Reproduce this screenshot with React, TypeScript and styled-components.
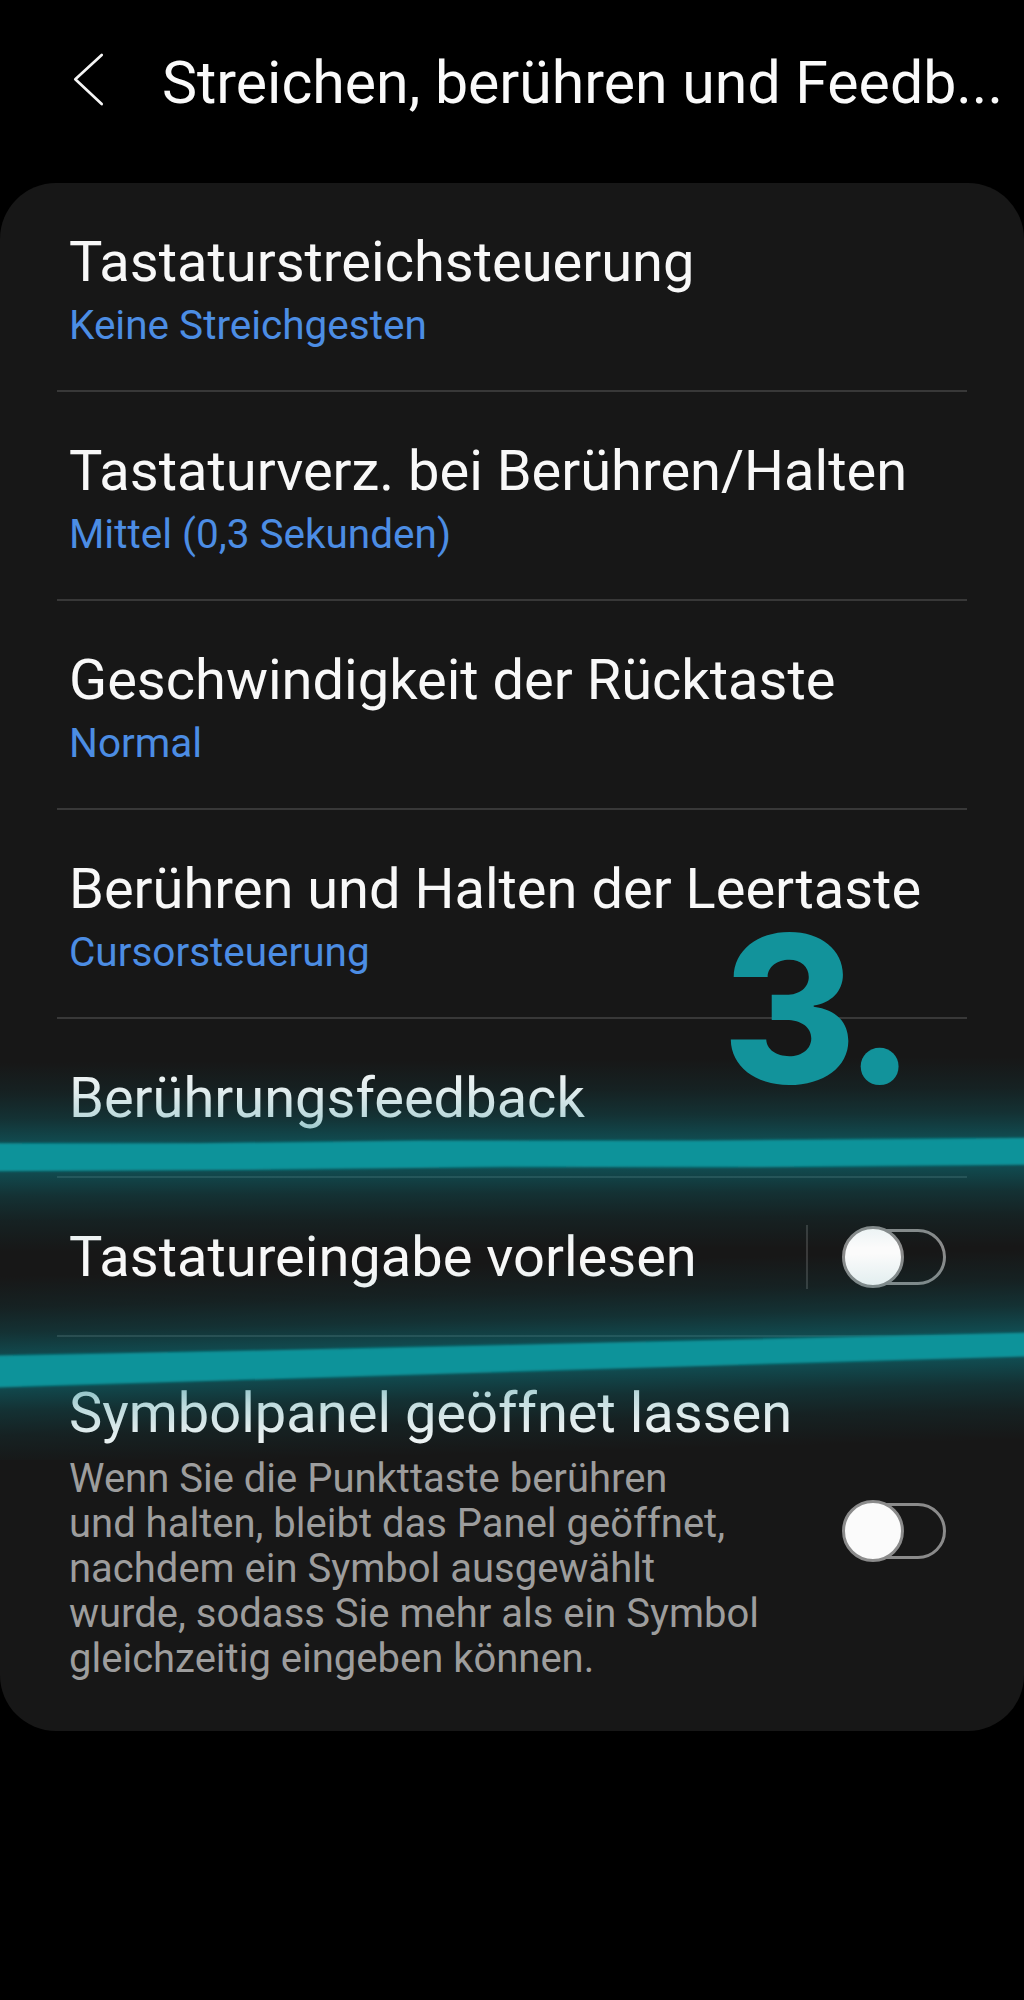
import React from "react";
import styled, { createGlobalStyle } from "styled-components";

const GlobalStyle = createGlobalStyle`
  html, body {
    margin: 0;
    padding: 0;
    background: #000;
  }
  body {
    font-family: Roboto, "Noto Sans", "Liberation Sans", sans-serif;
    -webkit-font-smoothing: antialiased;
  }
  * {
    box-sizing: border-box;
  }
`;

const Page = styled.div`
  position: relative;
  width: 1024px;
  min-height: 2000px;
  background: #000;
  overflow: hidden;
`;

const Header = styled.header`
  display: flex;
  align-items: flex-start;
  gap: 57px;
  height: 116px;
  padding: 50px 10px 0 73px;
`;

const BackIcon = styled.svg`
  flex: none;
  margin-top: 2px;
`;

const Title = styled.h1`
  margin: 0;
  font-size: 59px;
  line-height: 66px;
  font-weight: 400;
  color: #fafafa;
  white-space: nowrap;
`;

const Card = styled.section`
  margin-top: 67px;
  background: #171717;
  border-radius: 56px;
  padding: 0 57px;
`;

type RowKind = "double" | "single" | "last";

const rowPadding: Record<RowKind, string> = {
  double: "46px 21px 42px 12px",
  single: "46px 21px 45px 12px",
  last: "43px 21px 50px 12px",
};

const Row = styled.div<{ $kind: RowKind }>`
  display: flex;
  align-items: center;
  padding: ${(p) => rowPadding[p.$kind]};
  border-bottom: ${(p) => (p.$kind === "last" ? "none" : "2px solid #383838")};
`;

const TextCol = styled.div`
  flex: 1;
  min-width: 0;
  display: flex;
  flex-direction: column;
`;

const ItemTitle = styled.div`
  font-size: 56px;
  line-height: 66px;
  color: #f8f8f8;
  white-space: nowrap;
`;

const ItemValue = styled.div<{ $tone: "blue" | "gray" }>`
  margin-top: ${(p) => (p.$tone === "blue" ? 8 : 10)}px;
  font-size: ${(p) => (p.$tone === "blue" ? 40.5 : 40)}px;
  line-height: 45px;
  color: ${(p) => (p.$tone === "blue" ? "#4c8de4" : "#9d9d9d")};
  white-space: nowrap;
`;

const Divider = styled.span`
  flex: none;
  width: 2px;
  height: 64px;
  background: #3a3a3a;
  margin-right: 34px;
`;

const Toggle = styled.div`
  position: relative;
  flex: none;
  width: 104px;
  height: 62px;
`;

const Track = styled.span`
  position: absolute;
  left: 6px;
  right: 0;
  top: 3px;
  bottom: 3px;
  border: 3px solid #8b8b8b;
  border-radius: 30px;
`;

const Thumb = styled.span`
  position: absolute;
  left: 0;
  top: 0;
  width: 62px;
  height: 62px;
  border-radius: 50%;
  background: #fbfbfb;
  border: 3px solid #8b8b8b;
`;

const StepNumber = styled.div`
  position: absolute;
  left: 722px;
  top: 906px;
  font-family: Inter, Roboto, sans-serif;
  font-weight: 800;
  font-size: 205px;
  line-height: 205px;
  color: #12939b;
  letter-spacing: -9px;
  pointer-events: none;
`;

const Stripes = styled.svg`
  position: absolute;
  left: 0;
  top: 1040px;
  width: 1024px;
  height: 420px;
  pointer-events: none;
`;

const Switch = () => (
  <Toggle>
    <Track />
    <Thumb />
  </Toggle>
);

const items = [
  { title: "Tastaturstreichsteuerung", value: "Keine Streichgesten" },
  { title: "Tastaturverz. bei Berühren/Halten", value: "Mittel (0,3 Sekunden)" },
  { title: "Geschwindigkeit der Rücktaste", value: "Normal" },
  { title: "Berühren und Halten der Leertaste", value: "Cursorsteuerung" },
];

export default function App() {
  return (
    <Page>
      <GlobalStyle />
      <Header>
        <BackIcon width="32" height="54" viewBox="0 0 32 54">
          <path
            d="M28.7 3 L2.3 27.3 L28.7 52"
            fill="none"
            stroke="#f5f5f5"
            strokeWidth="2.7"
            strokeLinecap="round"
            strokeLinejoin="round"
          />
        </BackIcon>
        <Title>Streichen, berühren und Feedb...</Title>
      </Header>

      <Card>
        {items.map((it) => (
          <Row key={it.title} $kind="double">
            <TextCol>
              <ItemTitle>{it.title}</ItemTitle>
              <ItemValue $tone="blue">{it.value}</ItemValue>
            </TextCol>
          </Row>
        ))}
        <Row $kind="single">
          <TextCol>
            <ItemTitle>Berührungsfeedback</ItemTitle>
          </TextCol>
        </Row>
        <Row $kind="single">
          <TextCol>
            <ItemTitle>Tastatureingabe vorlesen</ItemTitle>
          </TextCol>
          <Divider />
          <Switch />
        </Row>
        <Row $kind="last">
          <TextCol>
            <ItemTitle>Symbolpanel geöffnet lassen</ItemTitle>
            <ItemValue $tone="gray">
              Wenn Sie die Punkttaste berühren
              <br />
              und halten, bleibt das Panel geöffnet,
              <br />
              nachdem ein Symbol ausgewählt
              <br />
              wurde, sodass Sie mehr als ein Symbol
              <br />
              gleichzeitig eingeben können.
            </ItemValue>
          </TextCol>
          <Switch />
        </Row>
      </Card>

      <Stripes viewBox="0 0 1024 420">
        <defs>
          <linearGradient id="glow" x1="0" y1="0" x2="0" y2="1">
            <stop offset="0" stopColor="#0a808a" stopOpacity="0" />
            <stop offset="0.163" stopColor="#0a808a" stopOpacity="0.1" />
            <stop offset="0.295" stopColor="#0a808a" stopOpacity="0.25" />
            <stop offset="0.426" stopColor="#0a808a" stopOpacity="0.5" />
            <stop offset="0.574" stopColor="#0a808a" stopOpacity="0.5" />
            <stop offset="0.705" stopColor="#0a808a" stopOpacity="0.25" />
            <stop offset="0.837" stopColor="#0a808a" stopOpacity="0.1" />
            <stop offset="1" stopColor="#0a808a" stopOpacity="0" />
          </linearGradient>
          <filter id="soft" x="-5%" y="-50%" width="110%" height="200%">
            <feGaussianBlur stdDeviation="1.2" />
          </filter>
        </defs>
        <g transform="translate(512 114.5) rotate(-0.3) translate(-512 0)">
          <rect x="-40" y="-95" width="1104" height="190" fill="url(#glow)" />
          <path
            d="M-20 -14 L200 -13 L420 -14.5 L700 -13 L1044 -14 L1044 13 L760 14 L500 12.5 L250 14 L-20 14 Z"
            fill="#08939a"
            filter="url(#soft)"
          />
        </g>
        <g transform="translate(512 318) rotate(-1.5) translate(-512 0)">
          <rect x="-40" y="-95" width="1104" height="190" fill="url(#glow)" />
          <path
            d="M-20 -16 L300 -14 L600 -13 L1044 -12 L1044 12 L700 13 L350 14.5 L-20 16 Z"
            fill="#08939a"
            filter="url(#soft)"
          />
        </g>
      </Stripes>

      <StepNumber>3.</StepNumber>
    </Page>
  );
}
